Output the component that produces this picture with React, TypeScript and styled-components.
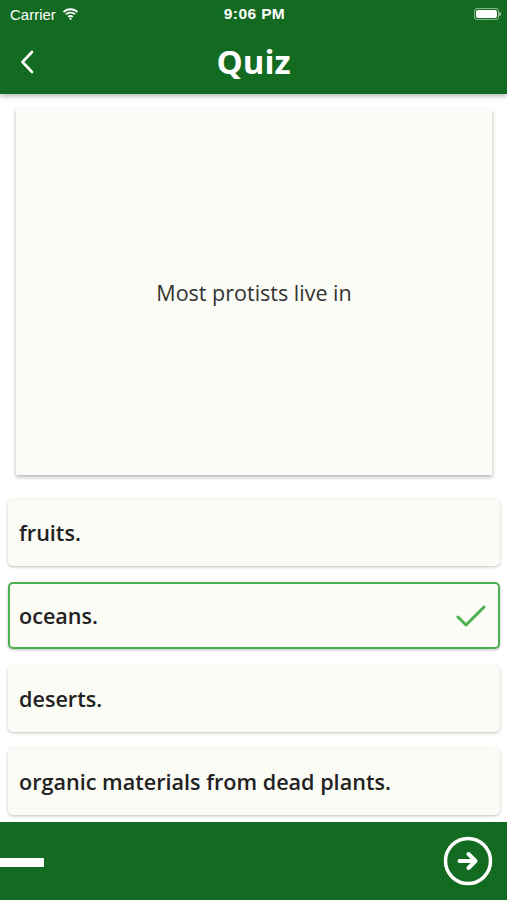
import React from "react";
import styled, { createGlobalStyle } from "styled-components";

const Global = createGlobalStyle`
  html, body { margin: 0; padding: 0; background: #ffffff; }
  body { font-family: "Open Sans", "Noto Sans", sans-serif; }
  * { box-sizing: border-box; }
`;

const GREEN = "#136b22";

const Screen = styled.div`
  width: 507px;
  height: 900px;
  display: flex;
  flex-direction: column;
  background: #ffffff;
  overflow: hidden;
`;

const Header = styled.header`
  background: ${GREEN};
  height: 94px;
  display: flex;
  flex-direction: column;
  box-shadow: 0 2px 5px rgba(0, 0, 0, 0.3);
  position: relative;
  z-index: 2;
  flex-shrink: 0;
`;

const StatusBar = styled.div`
  height: 28px;
  display: grid;
  grid-template-columns: 1fr auto 1fr;
  align-items: center;
  padding: 0 8px 0 10px;
  color: #ffffff;
  font-family: "Liberation Sans", Arial, sans-serif;
  font-size: 15px;
`;

const StatusLeft = styled.div`
  display: flex;
  align-items: center;
  gap: 6px;
`;

const Time = styled.span`
  font-weight: 700;
  font-size: 15.5px;
  letter-spacing: 0.4px;
`;

const StatusRight = styled.div`
  display: flex;
  justify-content: flex-end;
  align-items: center;
`;

const Battery = styled.div`
  width: 25px;
  height: 12px;
  border: 1px solid rgba(255, 255, 255, 0.5);
  border-radius: 3px;
  padding: 1px;
  position: relative;
  &::before {
    content: "";
    display: block;
    width: 100%;
    height: 100%;
    background: #fff;
    border-radius: 2px;
  }
  &::after {
    content: "";
    position: absolute;
    right: -3px;
    top: 3px;
    width: 2px;
    height: 4px;
    background: rgba(255, 255, 255, 0.5);
    border-radius: 0 1px 1px 0;
  }
`;

const NavBar = styled.div`
  flex: 1;
  display: grid;
  grid-template-columns: 60px 1fr 60px;
  align-items: center;
`;

const BackButton = styled.div`
  display: flex;
  align-items: center;
  padding-left: 20px;
  padding-top: 2px;
`;

const Title = styled.h1`
  margin: 0;
  text-align: center;
  color: #ffffff;
  font-family: "Open Sans", sans-serif;
  font-weight: 700;
  font-size: 33px;
`;

const Content = styled.main`
  flex: 1;
  display: flex;
  flex-direction: column;
  padding: 15px 7px 0 8px;
`;

const QuestionCard = styled.section`
  margin: 0 8px 0 8px;
  height: 366px;
  background: #fbfcf5;
  box-shadow: 0 2px 4px rgba(0, 0, 0, 0.3);
  display: flex;
  align-items: center;
  justify-content: center;
`;

const QuestionText = styled.p`
  margin: 0;
  font-size: 21.5px;
  color: #333333;
  font-family: "Open Sans", sans-serif;
`;

const Options = styled.div`
  display: flex;
  flex-direction: column;
  gap: 16px;
  margin-top: 24px;
`;

const Option = styled.div<{ $selected?: boolean }>`
  height: 67px;
  background: #fbfcf5;
  border-radius: 5px;
  border: 2px solid ${(p) => (p.$selected ? "#4caf50" : "transparent")};
  box-shadow: 0 1px 3px rgba(0, 0, 0, 0.25);
  display: flex;
  align-items: center;
  justify-content: space-between;
  padding: 0 12px 0 9px;
  font-family: "Open Sans", sans-serif;
  font-weight: 600;
  font-size: 21.6px;
  color: #222222;
`;

const Footer = styled.footer`
  height: 78px;
  background: ${GREEN};
  display: flex;
  align-items: center;
  justify-content: space-between;
  padding-right: 14px;
  flex-shrink: 0;
`;

const Progress = styled.div`
  width: 44px;
  height: 9px;
  background: #ffffff;
  border-radius: 0 1px 1px 0;
  margin-top: 2px;
`;

export default function App() {
  const options = [
    "fruits.",
    "oceans.",
    "deserts.",
    "organic materials from dead plants.",
  ];
  return (
    <>
      <Global />
      <Screen>
        <Header>
          <StatusBar>
            <StatusLeft>
              <span>Carrier</span>
              <svg width="17" height="12" viewBox="0 0 17 12">
                <path d="M8.5 2.2c2.4 0 4.6.9 6.3 2.5l1.3-1.3C14 1.4 11.4.3 8.5.3S3 1.4.9 3.4l1.3 1.3C3.9 3.1 6.1 2.2 8.5 2.2z" fill="#fff" />
                <path d="M8.5 5.6c1.5 0 2.8.5 3.9 1.5l1.3-1.3C12.3 4.5 10.5 3.7 8.5 3.7S4.7 4.5 3.3 5.8l1.3 1.3c1.1-1 2.4-1.5 3.9-1.5z" fill="#fff" />
                <path d="M8.5 8.9c.6 0 1.2.2 1.6.6l1.3-1.3c-.8-.7-1.8-1.2-2.9-1.2s-2.1.5-2.9 1.2l1.3 1.3c.4-.4 1-.6 1.6-.6z" fill="#fff" />
                <circle cx="8.5" cy="10.8" r="1.1" fill="#fff" />
              </svg>
            </StatusLeft>
            <Time>9:06 PM</Time>
            <StatusRight>
              <Battery />
            </StatusRight>
          </StatusBar>
          <NavBar>
            <BackButton>
              <svg width="14" height="24" viewBox="0 0 14 24">
                <path d="M12 2 L2.5 12 L12 22" stroke="#fff" strokeWidth="2.6" fill="none" strokeLinecap="round" strokeLinejoin="round" />
              </svg>
            </BackButton>
            <Title>Quiz</Title>
            <div />
          </NavBar>
        </Header>
        <Content>
          <QuestionCard>
            <QuestionText>Most protists live in</QuestionText>
          </QuestionCard>
          <Options>
            {options.map((o, i) => (
              <Option key={o} $selected={i === 1}>
                <span>{o}</span>
                {i === 1 && (
                  <svg width="30" height="22" viewBox="0 0 30 22">
                    <path d="M2 12 L10 20 L28 2" stroke="#4caf50" strokeWidth="3" fill="none" strokeLinecap="round" strokeLinejoin="round" />
                  </svg>
                )}
              </Option>
            ))}
          </Options>
        </Content>
        <Footer>
          <Progress />
          <svg width="50" height="50" viewBox="0 0 50 50">
            <circle cx="25" cy="25" r="22.5" stroke="#fff" strokeWidth="3.5" fill="none" />
            <path d="M16.5 25 H32 M25.5 18 L32.5 25 L25.5 32" stroke="#fff" strokeWidth="4" fill="none" strokeLinecap="round" strokeLinejoin="round" />
          </svg>
        </Footer>
      </Screen>
    </>
  );
}
